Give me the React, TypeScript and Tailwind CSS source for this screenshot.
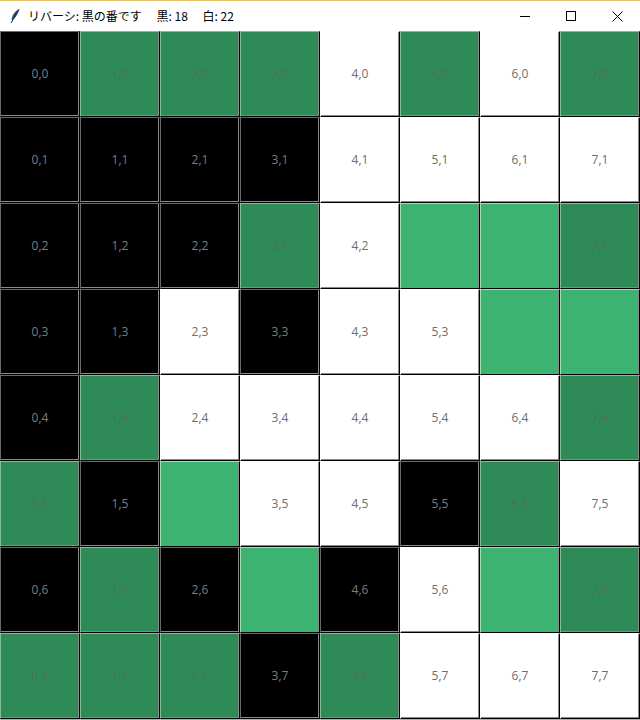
import React from 'react';

type Cell = 'B' | 'W' | 'G' | 'L';

const board: string[] = [
    'BGGGWGWG',
    'BBBBWWWW',
    'BBBGWLLG',
    'BBWBWWLL',
    'BGWWWWWG',
    'GBLWWBGW',
    'BGBLBWLG',
    'GGGBGWWW',
];

const cellBg: Record<Cell, string> = {
    B: 'bg-black border-t-[#6a6a6a] border-l-[#6a6a6a]',
    W: 'bg-white border-t-white border-l-white',
    G: 'bg-[#2e8b57] border-t-[#7fc09b] border-l-[#7fc09b]',
    L: 'bg-[#3cb371] border-t-[#9be0b6] border-l-[#9be0b6]',
};

const textColor: Record<Cell, string> = {
    B: 'text-[#7d7d7d]',
    W: 'text-[#6d6d6d]',
    G: 'text-[#5a6a60]',
    L: 'text-[#3cb371]',
};

const Feather = () => (
    <svg width="12" height="16" viewBox="0 0 12 16" className="shrink-0">
        <path d="M10.5 1 C6 3 3 7 2.5 12 L3.5 12 C6 10 9 6 10.5 1 Z" fill="#2b4a7a" />
        <path d="M10 1.5 L2 15" stroke="#1a2a40" strokeWidth="1" />
    </svg>
);

const TitleBar = () => (
    <div className="h-[31px] border-t border-[#e6c36a] bg-white flex items-center">
        <div className="pl-[9px] pr-[7px] flex items-center">
            <Feather />
        </div>
        <span className="text-[12px] text-black whitespace-pre" style={{ fontFamily: '"Noto Sans CJK JP", "Noto Sans", sans-serif' }}>
            {'リバーシ: 黒の番です　 黒: 18　 白: 22'}
        </span>
        <div className="ml-auto flex h-full">
            <div className="w-[46px] flex items-center justify-center">
                <div className="w-[10px] h-px bg-black" />
            </div>
            <div className="w-[46px] flex items-center justify-center">
                <div className="w-[10px] h-[10px] border border-black" />
            </div>
            <div className="w-[46px] flex items-center justify-center">
                <svg width="11" height="11" viewBox="0 0 11 11">
                    <path d="M0.5 0.5 L10.5 10.5 M10.5 0.5 L0.5 10.5" stroke="black" strokeWidth="1" />
                </svg>
            </div>
        </div>
    </div>
);

export default function App() {
    return (
        <div className="w-[640px] h-[720px] bg-white flex flex-col" style={{ fontFamily: '"Open Sans", "Noto Sans", sans-serif' }}>
            <TitleBar />
            <div className="grid grid-cols-8 grid-rows-[repeat(8,86px)]">
                {board.map((row, y) =>
                    row.split('').map((c, x) => {
                        const cell = c as Cell;
                        return (
                            <div
                                key={`${x}-${y}`}
                                className={`flex items-center justify-center border border-r-black border-b-black shadow-[inset_-1px_-1px_0_#8a8a8a] text-[12px] ${cellBg[cell]} ${textColor[cell]}`}
                            >
                                {x},{y}
                            </div>
                        );
                    })
                )}
            </div>
            <div className="h-px bg-[#d9a95a]" />
        </div>
    );
}
